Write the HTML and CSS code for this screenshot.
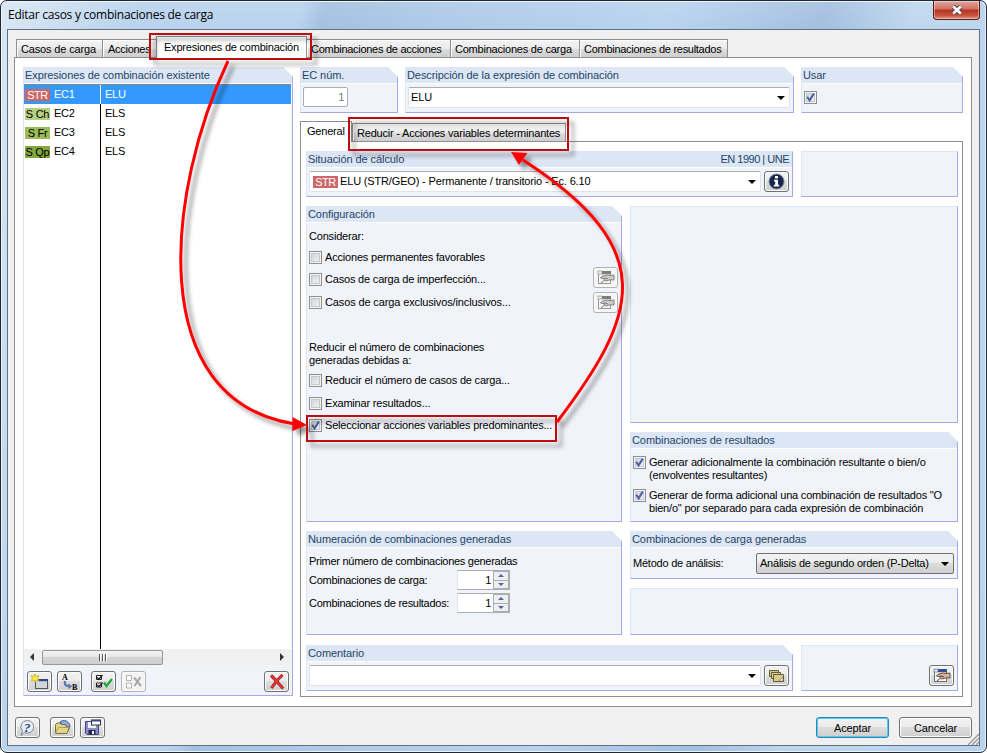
FILE: index.html
```html
<!DOCTYPE html>
<html lang="es">
<head>
    <meta charset="UTF-8">
    <title>Editar casos y combinaciones de carga</title>
    <link rel="stylesheet" href="styles.css">
</head>
<body>

<!-- Icons used more than once -->
<svg class="defs">
    <symbol id="tick" viewBox="0 0 11 11">
        <path d="M2.2 4.8 L4.6 8.4 L8.8 1.6" fill="none" stroke="#4a62a3" stroke-width="2"/>
    </symbol>
    <symbol id="hand" viewBox="0 0 18 16">
        <rect x="1.5" y="2.5" width="12" height="11" fill="#f4f4f4" stroke="#6d7480"/>
        <rect x="1" y="1" width="4" height="3" fill="#dfe6f4" stroke="#59667f" stroke-width=".6"/>
        <rect x="5" y="1" width="9" height="3.2" fill="#2f4f93"/>
        <path d="M17 5 L13 5.5 L10 5 L5 6.3 L3.5 8 L6 8.6 L8 8 L7 10 L9 11 L13 9.8 L17 10 Z" fill="#d8b596" stroke="#5a4639" stroke-width=".9"/>
        <path d="M8 8 L11 9 M4 13 L7 10.5" fill="none" stroke="#5a4639"/>
    </symbol>
</svg>

<div class="window">
    <div class="titlebar">
        <span class="title">Editar casos y combinaciones de carga</span>
        <div class="close">
            <svg width="12" height="10" viewBox="0 0 12 10"><path d="M2.2 1.5 L9.8 8.5 M9.8 1.5 L2.2 8.5" stroke="#55474f" stroke-width="4.6"/><path d="M2.2 1.5 L9.8 8.5 M9.8 1.5 L2.2 8.5" stroke="#fff" stroke-width="2.6"/></svg>
        </div>
    </div>

    <div class="client">
        <div class="tabs">
            <div class="tab tab-casos">Casos de carga</div>
            <div class="tab tab-acciones">Acciones</div>
            <div class="tab tab-expr active">Expresiones de combinación</div>
            <div class="tab tab-comb-acc">Combinaciones de acciones</div>
            <div class="tab tab-comb-carga">Combinaciones de carga</div>
            <div class="tab tab-comb-res">Combinaciones de resultados</div>
        </div>

        <div class="page">
            <!-- Existing expressions -->
            <div class="panel list-panel">
                <div class="panel-head">Expresiones de combinación existente</div>
                <div class="list">
                    <div class="list-row selected"><span class="tag tag-str">STR</span><span class="code">EC1</span><span class="desc">ELU</span></div>
                    <div class="list-row"><span class="tag tag-ch">S Ch</span><span class="code">EC2</span><span class="desc">ELS</span></div>
                    <div class="list-row"><span class="tag tag-fr">S Fr</span><span class="code">EC3</span><span class="desc">ELS</span></div>
                    <div class="list-row"><span class="tag tag-qp">S Qp</span><span class="code">EC4</span><span class="desc">ELS</span></div>
                    <div class="list-fill"></div>
                </div>
                <div class="scrollbar">
                    <span class="arrow-left"></span>
                    <div class="thumb"><i></i><i></i><i></i></div>
                    <span class="arrow-right"></span>
                </div>
                <div class="toolbar">
                    <div class="btn">
                        <svg width="19" height="16" viewBox="0 0 19 16"><rect x="5.5" y="5.5" width="12" height="9" fill="#d3d6d9" stroke="#4c5866"/><rect x="8" y="5" width="10" height="2.2" fill="#2a4a86"/><path d="M5 0 L6.3 2.6 L9 1.5 L7.6 4.2 L9 6.8 L6.3 6 L5 8.4 L3.8 6 L1.2 6.8 L2.4 4.2 L1.2 1.5 L3.8 2.6 Z" fill="#fff04a" stroke="#b9a20c" stroke-width=".7"/></svg>
                    </div>
                    <div class="btn btn-ab">
                        <svg width="19" height="18" viewBox="0 0 19 18"><text x="2" y="7" class="ab">A</text><text x="12" y="17" class="ab">B</text><path d="M5 8 C4.2 12 6 13.3 10 13.3" fill="none" stroke="#5a78b4" stroke-width="2.4"/><path d="M8.5 10.3 L12.2 13.3 L8.5 16.3 Z" fill="#5a78b4"/></svg>
                    </div>
                    <div class="btn btn-check">
                        <svg width="18" height="15" viewBox="0 0 18 15"><path d="M1.5 1.5 h5 v4 h-5 Z M1.5 9 h5 v4 h-5 Z" fill="#fff" stroke="#222"/><path d="M2 3.5 L4 5 L7.5 1 M2 11 L4 12.5 L7.5 8.5" fill="none" stroke="#222" stroke-width="1.3"/><path d="M9 8.5 L11.5 12 L17 5" fill="none" stroke="#23a63a" stroke-width="2.4"/></svg>
                    </div>
                    <div class="btn btn-uncheck disabled">
                        <svg width="18" height="15" viewBox="0 0 18 15"><path d="M1.5 1.5 h5 v5 h-5 Z M1.5 9 h5 v5 h-5 Z" fill="#fff" stroke="#999"/><path d="M9 3.5 L16 12 M15.5 3 L9.5 12" fill="none" stroke="#888" stroke-width="2"/></svg>
                    </div>
                    <div class="btn btn-delete">
                        <svg width="16" height="16" viewBox="0 0 16 16"><path d="M2 1.5 C6 5 10 10 14 14.5 M13.5 1 C9 5 5 10 2.5 14" fill="none" stroke="#8d1c1c" stroke-width="3"/><path d="M2 1.5 C6 5 10 10 14 14.5 M13.5 1 C9 5 5 10 2.5 14" fill="none" stroke="#e2353a" stroke-width="1.9"/></svg>
                    </div>
                </div>
            </div>

            <div class="main">
                <div class="top-row">
                    <div class="panel num-panel">
                        <div class="panel-head">EC núm.</div>
                        <div class="panel-body"><div class="num-field">1</div></div>
                    </div>
                    <div class="panel desc-panel">
                        <div class="panel-head">Descripción de la expresión de combinación</div>
                        <div class="panel-body"><div class="combo">ELU<span class="caret"></span></div></div>
                    </div>
                    <div class="panel use-panel">
                        <div class="panel-head">Usar</div>
                        <div class="panel-body"><span class="check"><svg><use href="#tick"/></svg></span></div>
                    </div>
                </div>

                <div class="subtabs">
                    <div class="subtab active">General</div>
                    <div class="subtab">Reducir - Acciones variables determinantes</div>
                </div>

                <div class="subpage">
                    <div class="row row-46">
                        <div class="panel wide no-cut">
                            <div class="panel-head"><span>Situación de cálculo</span><span class="norm">EN 1990 | UNE</span></div>
                            <div class="panel-body">
                                <div class="combo"><span class="tag tag-str">STR</span>ELU (STR/GEO) - Permanente / transitorio - Ec. 6.10<span class="caret"></span></div>
                                <div class="btn">
                                    <svg width="17" height="17" viewBox="0 0 17 17"><circle cx="8.5" cy="8.5" r="7.5" fill="#16264f" stroke="#7a8296"/><path d="M7 3 h3 v2.4 h-3 Z M6 6.8 h4 v5 h1.2 v1.6 h-5.4 v-1.6 h1.4 v-3.4 h-1.2 Z" fill="#fff"/></svg>
                                </div>
                            </div>
                        </div>
                        <div class="panel plain"></div>
                    </div>

                    <div class="row row-316">
                        <div class="panel half">
                            <div class="panel-head">Configuración</div>
                            <div class="config">
                                <p>Considerar:</p>
                                <div class="option opt-a"><span class="check"></span>Acciones permanentes favorables</div>
                                <div class="option opt-b"><span class="check"></span>Casos de carga de imperfección...<div class="btn disabled"><svg width="18" height="16"><use href="#hand"/></svg></div></div>
                                <div class="option opt-c"><span class="check"></span>Casos de carga exclusivos/inclusivos...<div class="btn disabled"><svg width="18" height="16"><use href="#hand"/></svg></div></div>
                                <p class="reduce">Reducir el número de combinaciones<br>generadas debidas a:</p>
                                <div class="option opt-d"><span class="check"></span>Reducir el número de casos de carga...</div>
                                <div class="option opt-e"><span class="check"></span>Examinar resultados...</div>
                                <div class="option opt-f"><span class="check"><svg><use href="#tick"/></svg></span>Seleccionar acciones variables predominantes...</div>
                            </div>
                        </div>
                        <div class="column">
                            <div class="panel plain"></div>
                            <div class="panel results">
                                <div class="panel-head">Combinaciones de resultados</div>
                                <div class="results-body">
                                    <div class="option multi"><span class="check"><svg><use href="#tick"/></svg></span><span>Generar adicionalmente la combinación resultante o bien/o<br>(envolventes resultantes)</span></div>
                                    <div class="option multi"><span class="check"><svg><use href="#tick"/></svg></span><span>Generar de forma adicional una combinación de resultados "O<br>bien/o" por separado para cada expresión de combinación</span></div>
                                </div>
                            </div>
                        </div>
                    </div>

                    <div class="row row-104">
                        <div class="panel half">
                            <div class="panel-head">Numeración de combinaciones generadas</div>
                            <div class="numbering">
                                <p>Primer número de combinaciones generadas</p>
                                <div class="spin-row"><span>Combinaciones de carga:</span><div class="spin">1<div class="spin-btns"><i class="up"></i><i class="down"></i></div></div></div>
                                <div class="spin-row"><span>Combinaciones de resultados:</span><div class="spin">1<div class="spin-btns"><i class="up"></i><i class="down"></i></div></div></div>
                            </div>
                        </div>
                        <div class="column">
                            <div class="panel method">
                                <div class="panel-head">Combinaciones de carga generadas</div>
                                <div class="method-body"><span>Método de análisis:</span><div class="select">Análisis de segundo orden (P-Delta)<span class="caret"></span></div></div>
                            </div>
                            <div class="panel plain"></div>
                        </div>
                    </div>

                    <div class="row row-46 last">
                        <div class="panel wide">
                            <div class="panel-head">Comentario</div>
                            <div class="panel-body">
                                <div class="combo"><span class="caret"></span></div>
                                <div class="btn">
                                    <svg width="17" height="14" viewBox="0 0 17 14"><g fill="#d6cb8c" stroke="#65603c"><path d="M1.5 1.5 h9 v6 h-9 Z"/><path d="M3.5 3.5 h9 v6 h-9 Z"/><path d="M5.5 5.5 h10 v7 h-10 Z"/></g><path d="M11 12 L15 8 V12 Z" fill="#fff" stroke="#65603c" stroke-width=".6"/></svg>
                                </div>
                            </div>
                        </div>
                        <div class="panel plain with-btn"><div class="btn"><svg width="18" height="16"><use href="#hand"/></svg></div></div>
                    </div>
                </div>
            </div>
        </div>

        <div class="footer">
            <div class="btn">
                <svg width="17" height="18" viewBox="0 0 17 18"><path d="M8.5 1.5 a6.5 6.3 0 1 1 -3 12 L2 16.5 L3.5 12 A6.5 6.3 0 0 1 8.5 1.5 Z" fill="#e9edf3" stroke="#7b8796"/><text x="5" y="12.5" class="help">?</text></svg>
            </div>
            <div class="btn btn-open">
                <svg width="18" height="17" viewBox="0 0 18 17"><path d="M6 3 C10 0 15 2 16 7 L14 12 Z" fill="#8fabe0" stroke="#3c5ca0"/><path d="M1.5 14.5 V5.5 L3 4 H6 L7.5 5.5 H12 V8 H15.5 L13 14.5 Z" fill="#e2d489" stroke="#7d7140"/><path d="M1.5 14.5 L4.5 8.5 H15.5" fill="none" stroke="#a2945a" stroke-width=".8"/></svg>
            </div>
            <div class="btn btn-save">
                <svg width="17" height="17" viewBox="0 0 17 17"><path d="M1.5 2.5 H14.5 V15.5 H3 L1.5 14 Z" fill="#8a8cd0" stroke="#45467f"/><rect x="4" y="3" width="8" height="6" fill="#eef0fa"/><rect x="4.5" y="11" width="7" height="4.5" fill="#24254a"/><rect x="8" y="12" width="2" height="3" fill="#fff"/><rect x="7.5" y="1" width="9" height="5" fill="#fff" stroke="#333"/><path d="M7.5 1.7 H16.5" stroke="#2d4c92" stroke-width="1.6"/></svg>
            </div>
            <div class="dialog-btn primary">Aceptar</div>
            <div class="dialog-btn">Cancelar</div>
        </div>
        <svg class="grip" width="12" height="12"><path d="M1 12 L12 1 M5 12 L12 5 M9 12 L12 9" stroke="#9a9a9a" stroke-width="1.4"/></svg>
    </div>

    <!-- Red callouts drawn over the dialog -->
    <svg class="callouts" width="987" height="753" viewBox="0 0 987 753">
        <filter id="shadow" x="-20%" y="-20%" width="150%" height="150%"><feDropShadow dx="5" dy="5" stdDeviation="2" flood-color="#000" flood-opacity=".4"/></filter>
        <g filter="url(#shadow)">
            <g fill="none" stroke="#bd0b0b" stroke-width="2">
                <rect x="150" y="34" width="161" height="25"/>
                <rect x="349" y="118" width="219" height="32"/>
                <rect x="307" y="416" width="249" height="25"/>
            </g>
            <path d="M228 61 C167 190 143 400 295 424" fill="none" stroke="#f00" stroke-width="3"/>
            <path d="M307 425 L292.5 417 L292.5 431 Z" fill="#f00"/>
            <path d="M557 422 C638 315 662 250 523 160" fill="none" stroke="#f00" stroke-width="3"/>
            <path d="M511 152 L527.5 153 L519 165 Z" fill="#f00"/>
        </g>
    </svg>
</div>

</body>
</html>
```

FILE: styles.css
```css
* {
    box-sizing: border-box;
}

body {
    margin: 0;
    background: #fff;
    font-family: "Liberation Sans", Arial, sans-serif;
    font-size: 11px;
    line-height: 13px;
    letter-spacing: -0.28px;
    color: #000;
    overflow: hidden;
}

p {
    margin: 0;
}

.defs {
    display: none;
}

.window {
    position: relative;
    width: 987px;
    height: 753px;
    border: 1px solid #22262e;
    border-radius: 7px;
    padding: 0 6px 6px;
    background: linear-gradient(100deg, #d9e7f5 0%, #b9d3ee 12%, #b9d3ee 27%, #a4c1e0 29%, #aecae7 40%, #b9d3ee 60%, #a3bfdf 74%, #bfd7ee 82%, #b9d3ee 100%);
    box-shadow: inset 0 0 0 1px #e8f4fc;
}

.titlebar {
    height: 28px;
    display: flex;
    justify-content: space-between;
    background: linear-gradient(rgba(255,255,255,.1), rgba(255,255,255,0));
}

.title {
    font-family: "Open Sans", sans-serif;
    font-size: 12px;
    letter-spacing: -0.25px;
    padding: 7px 0 0 1px;
    white-space: nowrap;
}

.close {
    width: 47px;
    height: 19px;
    border: 1px solid #5b1c19;
    border-top: 0;
    border-radius: 0 0 4px 4px;
    background: linear-gradient(#e0a79d 0%, #cf7264 45%, #b6311f 50%, #c8533c 80%, #e3967e 100%);
    box-shadow: inset 0 0 0 1px rgba(255,255,255,.4);
    display: flex;
    align-items: center;
    justify-content: center;
}

.client {
    position: relative;
    height: 717px;
    border: 1px solid #62717e;
    background: #f0f0f0;
    padding: 6px 7px 0 6px;
}

/* ---- tabs ---- */
.tabs {
    display: flex;
    align-items: flex-end;
    height: 21px;
    padding-left: 2px;
    position: relative;
    z-index: 1;
}

.tab {
    height: 18px;
    border: 1px solid #8c8e94;
    border-bottom: 0;
    background: linear-gradient(#f3f3f3, #ebebeb 50%, #dcdcdc 51%, #cfcfcf);
    box-shadow: inset 1px 1px 0 #fff;
    padding: 3px 0 0 4px;
    white-space: nowrap;
    overflow: hidden;
    margin-right: -1px;
}

.tab.active {
    height: 22px;
    margin-bottom: -1px;
    background: #fff;
    padding: 4px 0 0 7px;
}

.tab-casos { width: 87px; letter-spacing: -0.15px; }
.tab-acciones { width: 55px; padding-left: 5px; }
.tab-expr { width: 151px; letter-spacing: -0.22px; }
.tab-comb-acc { width: 145px; }
.tab-comb-carga { width: 130px; letter-spacing: -0.22px; }
.tab-comb-res { width: 149px; }

.page {
    height: 650px;
    border: 1px solid #8c8e94;
    background: #fff;
    padding: 9px 8px 0;
    display: flex;
    gap: 7px;
}

/* ---- panels ---- */
.panel {
    background: #f0f3f9;
    border: 1px solid #a8a8e8;
    border-top-color: #dce6f4;
    border-left-color: #dce6f4;
    display: flex;
    flex-direction: column;
}

.panel:not(.plain):not(.no-cut) {
    clip-path: polygon(0 0, calc(100% - 10px) 0, 100% 10px, 100% 100%, 0 100%);
}

.panel-head {
    display: flex;
    justify-content: space-between;
    height: 16px;
    flex-shrink: 0;
    padding: 1px 3px 0 1px;
    background: #dce6f4;
    border-bottom: 1px solid #fff;
    color: #1f4569;
    letter-spacing: -0.08px;
    white-space: nowrap;
}

.norm {
    letter-spacing: -0.5px;
}

.panel-body {
    display: flex;
    gap: 3px;
    padding: 3px 3px 0 2px;
}

/* ---- expression list ---- */
.list-panel {
    width: 270px;
    height: 629px;
}

.list {
    height: 565px;
    background: #fff;
    margin-right: 1px;
    border-top: 1px solid #888;
    display: flex;
    flex-direction: column;
}

.list-row {
    height: 19px;
    display: flex;
    align-items: center;
    flex-shrink: 0;
}

.list-row.selected {
    background: #3399ff;
    color: #fff;
}

.tag {
    width: 25px;
    height: 12px;
    line-height: 13px;
    text-align: center;
    margin-left: 1px;
    flex-shrink: 0;
}

.tag-str { background: #cd6868; color: #fff; letter-spacing: -0.5px; }
.tag-ch { background: #b5d080; }
.tag-fr { background: #9bbb59; }
.tag-qp { background: #83a63d; }

.code {
    width: 51px;
    padding-left: 4px;
    align-self: stretch;
    line-height: 19px;
    border-right: 1px solid #000;
}

.selected .code {
    border-color: #fff;
}

.desc {
    padding-left: 4px;
}

.list-fill {
    flex: 1;
    width: 77px;
    border-right: 1px solid #000;
}

.scrollbar {
    display: flex;
    align-items: center;
    height: 16px;
    background: #f0f0f0;
    margin-right: 1px;
    padding: 0 7px 0 6px;
}

.arrow-left,
.arrow-right {
    border: 4px solid transparent;
}

.arrow-left {
    border-left: 0;
    border-right: 4px solid #333;
}

.arrow-right {
    border-right: 0;
    border-left: 4px solid #333;
    margin-left: auto;
}

.thumb {
    width: 121px;
    height: 15px;
    margin-left: 8px;
    border: 1px solid #979797;
    border-radius: 2px;
    background: linear-gradient(#f4f4f4, #e6e6e6 49%, #d3d3d3 50%, #d0d0d0);
    display: flex;
    gap: 1px;
    align-items: center;
    justify-content: center;
}

.thumb i {
    width: 2px;
    height: 7px;
    border-left: 1px solid #555;
    background: #fff;
}

.toolbar {
    display: flex;
    padding: 6px 3px 0;
}

.btn-ab { margin-left: 5px; }
.btn-check { margin-left: 9px; }
.btn-uncheck { margin-left: 5px; }
.btn-delete { margin-left: auto; }

.btn {
    width: 25px;
    height: 21px;
    flex-shrink: 0;
    border: 1px solid #707070;
    border-radius: 3px;
    background: linear-gradient(#f2f2f2, #ebebeb 49%, #dddddd 50%, #cfcfcf);
    box-shadow: inset 0 0 0 1px #fcfcfc;
    display: flex;
    align-items: center;
    justify-content: center;
}

.btn.disabled {
    border-color: #adb2b5;
    background: #f4f4f4;
}

.btn.disabled svg {
    filter: grayscale(1);
    opacity: .7;
}

.ab {
    font: bold 8px "Liberation Serif", serif;
    letter-spacing: 0;
}

.help {
    font: italic bold 13px "Liberation Serif", serif;
    letter-spacing: 0;
    fill: #1f3f83;
}

/* ---- right side ---- */
.main {
    width: 663px;
}

.top-row {
    display: flex;
    gap: 7px;
}

.num-panel { width: 98px; height: 46px; }
.desc-panel { width: 389px; height: 46px; }
.use-panel { width: 162px; height: 46px; }

.num-field {
    width: 45px;
    height: 20px;
    border: 1px solid #abadb3;
    border-radius: 2px;
    background: #fff;
    color: #777;
    text-align: right;
    padding: 3px 3px 0 0;
}

.combo {
    flex: 1;
    height: 21px;
    display: flex;
    align-items: center;
    background: #fff;
    border: 1px solid #e2e3ea;
    border-top-color: #abadb3;
    border-radius: 2px;
    padding: 0 4px 0 2px;
    letter-spacing: -0.16px;
}

.combo .tag {
    margin: 0 2px 0 1px;
}

.caret {
    margin-left: auto;
    border: 4px solid transparent;
    border-top-color: #000;
    border-bottom: 0;
}

.use-panel .panel-body {
    padding: 7px 2px 0;
}

.check {
    width: 13px;
    height: 13px;
    flex-shrink: 0;
    border: 1px solid #8e8f8f;
    box-shadow: inset 0 0 0 1px #f4f4f4, inset 0 0 0 2px #c5c9ce;
    background: linear-gradient(135deg, #cbcfd5, #f6f6f6);
}

.check svg {
    display: block;
    width: 11px;
    height: 11px;
}

.subtabs {
    display: flex;
    align-items: flex-end;
    height: 28px;
    position: relative;
    z-index: 1;
}

.subtab {
    height: 18px;
    width: 214px;
    border: 1px solid #8c8e94;
    border-bottom: 0;
    background: linear-gradient(#f3f3f3, #ebebeb 50%, #dcdcdc 51%, #cfcfcf);
    box-shadow: inset 1px 1px 0 #fff;
    padding: 3px 0 0 4px;
    letter-spacing: -0.2px;
    white-space: nowrap;
}

.subtab.active {
    width: 52px;
    height: 21px;
    margin-bottom: -1px;
    background: #fff;
    padding: 3px 0 0 6px;
}

.subpage {
    height: 556px;
    border: 1px solid #8c8e94;
    padding: 9px 4px 0 5px;
    display: flex;
    flex-direction: column;
    gap: 9px;
}

.row {
    display: flex;
    gap: 8px;
    flex-shrink: 0;
}

.row-46 { height: 46px; }
.row-316 { height: 316px; }
.row-104 { height: 104px; }
.last { margin-top: 1px; }

.wide { width: 487px; }
.half { width: 316px; }

.row > .plain,
.column {
    flex: 1;
}

.column {
    display: flex;
    flex-direction: column;
    gap: 9px;
}

.column .plain { flex: 1; }
.results { height: 90px; }
.method { height: 48px; }

.config {
    padding: 7px 3px 0 2px;
    letter-spacing: -0.19px;
}

.option {
    display: flex;
    align-items: center;
    gap: 3px;
    height: 22px;
    white-space: nowrap;
}

.option .btn { margin-left: auto; }

.opt-a { margin-top: 3px; }
.opt-b .btn { margin-bottom: 3px; }
.opt-c { height: 25px; letter-spacing: -0.13px; }
.reduce { margin: 26px 0 1px; }
.opt-d { height: 24px; }
.opt-e { height: 22px; }
.opt-f { height: 23px; }

.results-body {
    padding: 7px 2px 0;
    display: flex;
    flex-direction: column;
    gap: 7px;
    letter-spacing: -0.19px;
}

.option.multi {
    height: 26px;
    align-items: flex-start;
}

.numbering {
    padding: 7px 2px 0;
}

.spin-row {
    display: flex;
    align-items: center;
    height: 20px;
    margin-top: 2px;
}

.spin-row + .spin-row {
    margin-top: 3px;
}

.spin-row > span {
    width: 148px;
    white-space: nowrap;
}

.spin {
    width: 53px;
    height: 20px;
    display: flex;
    justify-content: flex-end;
    background: #fff;
    border: 1px solid #abadb3;
    border-left-color: #e2e3ea;
    line-height: 18px;
}

.spin-btns {
    width: 16px;
    margin-left: 2px;
    display: flex;
    flex-direction: column;
    gap: 1px;
    border: 1px solid #abadb3;
    background: #abadb3;
}

.spin-btns i {
    flex: 1;
    background: #efefef;
    display: flex;
    align-items: center;
    justify-content: center;
}

.spin-btns i::after {
    content: "";
    border: 3px solid transparent;
}

.spin-btns .up::after {
    border-top-width: 0;
    border-bottom-color: #4d63ae;
}

.spin-btns .down::after {
    border-bottom-width: 0;
    border-top-color: #4d63ae;
}

.method-body {
    display: flex;
    align-items: center;
    justify-content: space-between;
    padding: 5px 3px 0 2px;
    letter-spacing: -0.23px;
}

.select {
    width: 198px;
    height: 21px;
    display: flex;
    align-items: center;
    border: 1px solid #707070;
    border-radius: 2px;
    padding: 0 4px 0 3px;
    background: linear-gradient(#f2f2f2, #ebebeb 49%, #dddddd 50%, #cfcfcf);
}

.plain.with-btn {
    align-items: flex-end;
    justify-content: flex-end;
    padding: 0 3px 4px;
}

/* ---- bottom buttons ---- */
.footer {
    display: flex;
    padding: 10px 0 0 1px;
}

.btn-open { margin-left: 10px; }
.btn-save { margin-left: 5px; }

.dialog-btn {
    width: 73px;
    height: 21px;
    margin-left: 10px;
    text-align: center;
    line-height: 20px;
    letter-spacing: -0.15px;
    border: 1px solid #707070;
    border-radius: 3px;
    background: linear-gradient(#f2f2f2, #ebebeb 49%, #dddddd 50%, #cfcfcf);
    box-shadow: inset 0 0 0 1px #fcfcfc;
}

.dialog-btn.primary {
    margin-left: auto;
    border-color: #3c7fb1;
    box-shadow: inset 0 0 0 1px #4bcdf5;
}

.grip {
    position: absolute;
    right: 0;
    bottom: 0;
}

.callouts {
    position: absolute;
    left: -1px;
    top: -1px;
    pointer-events: none;
    z-index: 5;
}
```
